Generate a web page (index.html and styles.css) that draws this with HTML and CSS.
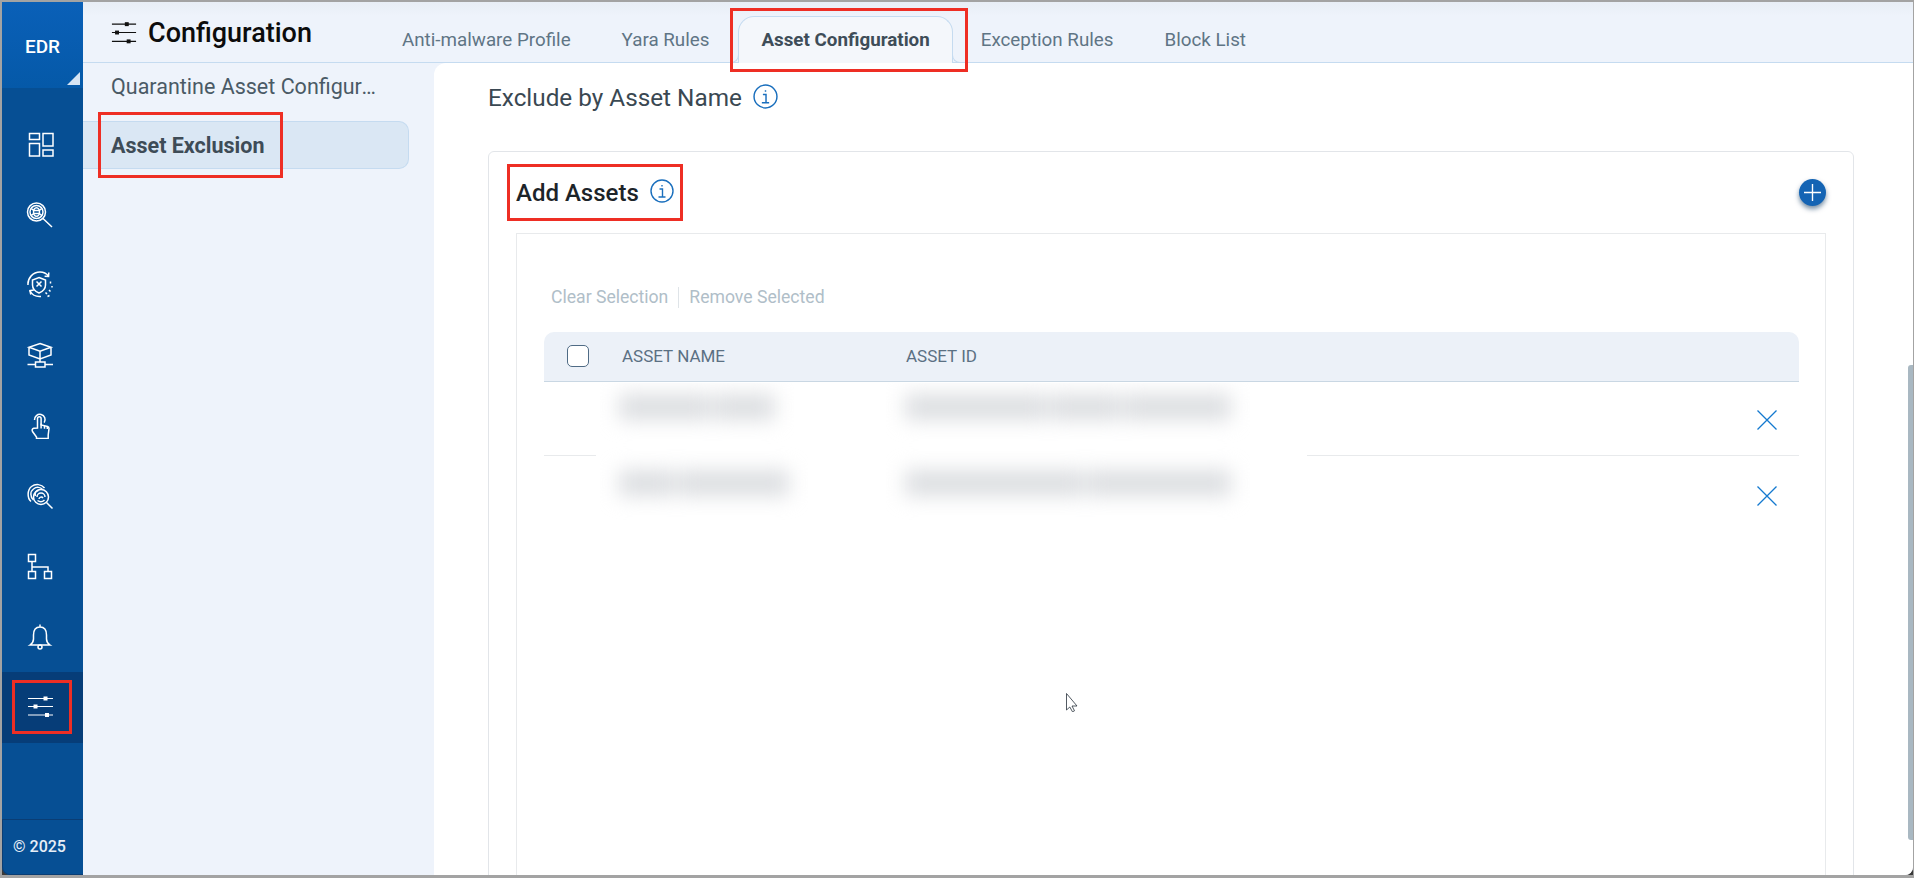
FILE: index.html
```html
<!DOCTYPE html>
<html lang="en">
<head>
<meta charset="utf-8">
<title>Configuration</title>
<link rel="stylesheet" href="styles.css">
</head>
<body>
<div class="frame">
  <aside class="sidebar">
    <div class="brand">EDR<span class="brand-corner"></span></div>
    <nav class="rail">
      <a class="rail-item"><svg class="ico" viewBox="0 0 28 28"><rect x="3.500" y="4.500" width="10" height="6"/><rect x="3.500" y="14.500" width="10" height="12.500"/><rect x="17" y="4.500" width="10" height="12.500"/><rect x="17" y="21" width="10" height="6"/></svg></a>
      <a class="rail-item"><svg class="ico" viewBox="0 0 28 28"><circle cx="10.500" cy="12" r="9"/><circle cx="10.500" cy="12" r="6.500"/><ellipse cx="10.500" cy="12" rx="3" ry="4.300"/><path d="M7.500 10.500h6M7.500 13.500h6M5.500 9l2 1M15.500 9l-2 1M5.500 15l2-1M15.500 15l-2-1M17 18.500l9 8.500"/></svg></a>
      <a class="rail-item"><svg class="ico" viewBox="0 0 28 28"><path d="M2 15C1.500 8 7 2 14 2c3.500 0 6.500 1.500 8.500 4M22.800 2.500l-.2 4-4-.3M4 21c2 3.500 6 6 11 5.500"/><path d="M4.800 24.500l-.9-3.800 3.900-.6"/><path d="M13 7.500l6.500 2.500v5c0 4-3 6.500-6.500 8-3.500-1.500-6.500-4-6.500-8v-5z"/><path d="M10.500 11.500l5 5M15.500 11.500l-5 5"/><path d="M24.500 11.500v2M26 16v1.500M19.500 22.500l1.500 1.500M23 20l1.500 1.500M21.500 26.500l2-1"/></svg></a>
      <a class="rail-item"><svg class="ico" viewBox="0 0 28 28"><path d="M14 2.500l11 3.800-11 4-11-4zM3 6.300V14l11 4 11-4V6.300M14 10.300V21"/><rect x="9.500" y="21" width="9.500" height="5"/><path d="M1.500 23.500h8M19 23.500h8"/></svg></a>
      <a class="rail-item"><svg class="ico" viewBox="0 0 28 28"><path d="M8.500 9a5.300 5.300 0 1 1 9.700 2.600"/><path d="M11.500 17V7.500a1.800 1.800 0 0 1 3.600 0V14l6.500 1.500c1 .3 1.400 1 1.400 2l-.8 6.500v3.500H10.500V26l-4-5.500c-.8-1.500 0-3 1.300-3.300z"/><path d="M15.100 12.500v5M18.500 14.800v3M21.300 15.500v2.500"/></svg></a>
      <a class="rail-item"><svg class="ico" viewBox="0 0 28 28"><path d="M5 19.500C1 16 1.200 8 5.500 4.500 9.500 1.500 15.500 2 18.500 6M7.500 18C4 15 4 9.500 7.500 7 10.500 4.500 14.500 5 16.500 7.500M9.500 14c-1-2.500 0-5 3-5.500"/><circle cx="15" cy="15" r="7.500"/><path d="M11 15a4 4 0 0 1 8 0M13 17a2.200 2.200 0 0 1 4-1M11.500 18.500c2 1.500 5 1.500 7-.5M20.500 20.500l6 6"/></svg></a>
      <a class="rail-item"><svg class="ico" viewBox="0 0 28 28"><rect x="2.500" y="2.500" width="7" height="7"/><rect x="2.500" y="19.500" width="7" height="7"/><rect x="18.500" y="19.500" width="7" height="7"/><path d="M6 9.500v10M6 15h16v4.500"/></svg></a>
      <a class="rail-item"><svg class="ico" viewBox="0 0 28 28"><path d="M14 1.500v2.500M14 4c-5 0-6.500 4-6.500 8v4c0 2.500-2 5-3.500 6h20c-1.500-1-3.500-3.500-3.500-6v-4c0-4-1.500-8-6.500-8z"/><circle cx="14" cy="24" r="2"/></svg></a>
      <a class="rail-item rail-active"><svg class="ico ico-sliders" viewBox="0 0 28 28"><path d="M2 5.500h25M2 13.500h25M2 22h25"/><rect x="17.500" y="3.500" width="4" height="4"/><rect x="7.500" y="11.500" width="4" height="4"/><rect x="19" y="20" width="4" height="4"/></svg></a>
    </nav>
    <div class="copyright">© 2025</div>
  </aside>

  <div class="main">
    <header class="topbar">
      <div class="title"><svg class="title-ico" viewBox="0 0 28 28"><path d="M1 4.500h26M1 13.500h26M1 23h26"/><rect x="15.500" y="3" width="3" height="3"/><rect x="5" y="12" width="3" height="3"/><rect x="17.500" y="21.500" width="3" height="3"/></svg><h1>Configuration</h1></div>
      <div class="tabs">
        <a class="tab">Anti-malware Profile</a>
        <a class="tab">Yara Rules</a>
        <a class="tab tab-active">Asset Configuration</a>
        <a class="tab">Exception Rules</a>
        <a class="tab">Block List</a>
      </div>
    </header>
    <div class="body">
      <div class="subnav">
        <a class="subnav-item">Quarantine Asset Configuration</a>
        <a class="subnav-item subnav-active">Asset Exclusion</a>
      </div>
      <section class="panel">
        <div class="panel-head">
          <h2>Exclude by Asset Name</h2>
          <svg class="info info-lg" viewBox="0 0 24 24"><circle cx="12" cy="12" r="11"/><path d="M9.500 10h3v8M8.500 18h7M12 6v1.500"/></svg>
        </div>
        <div class="card">
          <div class="card-head">
            <h3>Add Assets</h3>
            <svg class="info info-up" viewBox="0 0 24 24"><circle cx="12" cy="12" r="11"/><path d="M9.500 10h3v8M8.500 18h7M12 6v1.500"/></svg>
            <button class="add" type="button"><svg viewBox="0 0 16 16"><path d="M8 0v16M0 8h16"/></svg></button>
          </div>
          <div class="box">
            <div class="actions"><span>Clear Selection</span><i></i><span>Remove Selected</span></div>
            <div class="table">
              <div class="thead">
                <span class="check"></span>
                <span class="col-name">ASSET NAME</span>
                <span class="col-id">ASSET ID</span>
              </div>
              <div class="row row-first"><svg class="close" viewBox="0 0 20 20"><path d="M.5.500l19 19M19.500.500l-19 19"/></svg></div>
              <div class="row row-last"><svg class="close" viewBox="0 0 20 20"><path d="M.5.500l19 19M19.500.500l-19 19"/></svg></div>
              <div class="redact">
                <div class="redact-row redact-row-a">
                  <div class="blobs blobs-name"><b class="w60"></b><b class="w40"></b></div>
                  <div class="blobs blobs-id"><b class="w40"></b><b class="w20"></b><b class="w30"></b></div>
                </div>
                <div class="redact-row redact-row-b">
                  <div class="blobs blobs-name blobs-wide"><b class="w30"></b><b class="w60"></b></div>
                  <div class="blobs blobs-id"><b class="w50"></b><b class="w40"></b></div>
                </div>
              </div>
            </div>
          </div>
        </div>
      </section>
    </div>
  </div>

  <div class="scroll-thumb"></div>
  <svg class="cursor" viewBox="0 0 12 19"><path d="M.5.500v16.500l3.300-3 2.700 4.800 2-1-2.500-4.800h5z"/></svg>
  <div class="mark mark-exclusion"></div>
  <div class="mark mark-tab"></div>
  <div class="mark mark-add"></div>
  <div class="mark mark-rail"></div>
</div>
</body>
</html>
```

FILE: styles.css
```css
* { box-sizing: border-box; }
html, body { margin: 0; height: 100%; overflow: hidden; }
body { background: #a3a3a3; font-family: Roboto, "Liberation Sans", sans-serif; }
h1, h2, h3 { margin: 0; font-weight: 500; }

.frame {
  position: relative;
  width: 1914px;
  height: 878px;
  border-style: solid;
  border-color: #a3a3a3;
  border-width: 2px 1px 3px 2px;
  background: #3a3a3a;
  display: flex;
  overflow: hidden;
}

/* sidebar */
.sidebar {
  width: 81px;
  flex: none;
  display: flex;
  flex-direction: column;
  background: #064f94;
  border-bottom-left-radius: 8px;
  overflow: hidden;
}
.brand {
  position: relative;
  height: 86px;
  flex: none;
  background: linear-gradient(180deg, #0a60b8, #0559a8);
  color: #fff;
  font-size: 19px;
  font-weight: 500;
  text-align: center;
  padding-top: 33px;
  line-height: 24px;
}
.brand-corner {
  position: absolute;
  right: 3px;
  bottom: 3px;
  border-style: solid;
  border-width: 0 0 13px 13px;
  border-color: transparent transparent #d6e4f3 transparent;
}
.rail { padding-top: 20px; }
.rail-item {
  height: 70.5px;
  display: flex;
  align-items: center;
  justify-content: center;
  padding-right: 5px;
}
.rail-active { background: #063d78; }
.ico {
  width: 28px;
  height: 28px;
  fill: none;
  stroke: #fff;
  stroke-width: 1.500;
}
.ico-sliders { stroke-width: 1; }
.ico-sliders rect { fill: #fff; stroke: none; }
.copyright {
  margin-top: auto;
  height: 56px;
  border-top: 1px solid #0a3d74;
  border-bottom: 1px solid #0a3d74;
  border-left: 1px solid #0a3d74;
  border-bottom-left-radius: 8px;
  color: #e6eef7;
  font-size: 16px;
  font-weight: 500;
  line-height: 54px;
  padding-left: 10px;
}

/* main */
.main {
  flex: 1;
  min-width: 0;
  display: flex;
  flex-direction: column;
  background: #eef3fb;
  border-bottom-right-radius: 8px;
  overflow: hidden;
}
.topbar {
  height: 61px;
  flex: none;
  display: flex;
  align-items: flex-end;
  border-bottom: 1px solid #c5dbf0;
  background: linear-gradient(180deg, #e8eef6 0, #eef3fb 14px);
}
.title {
  width: 294px;
  flex: none;
  align-self: flex-start;
  display: flex;
  align-items: center;
  gap: 11px;
  padding: 17px 0 0 28px;
}
.title-ico { width: 26px; height: 26px; fill: #111; stroke: #111; stroke-width: 1.200; }
.title h1 { font-size: 27px; line-height: 28px; color: #0c0c0c; }
.tabs { display: flex; margin-bottom: -1px; }
.tab {
  position: relative;
  height: 47px;
  padding: 0 25px;
  line-height: 49px;
  font-size: 18.800px;
  color: #5f7585;
  white-space: nowrap;
  margin-right: 1px;
}
.tab-active {
  padding: 0 22px;
  margin: 0 3px 0 3px;
  background: #f4f7fb;
  border: 1px solid #c5dbf0;
  border-bottom: 0;
  border-radius: 16px 16px 0 0;
  font-weight: 700;
  color: #3e4d58;
  line-height: 47px;
}
.tab-active::before,
.tab-active::after {
  content: "";
  position: absolute;
  bottom: 0;
  width: 8px;
  height: 12px;
  border-bottom: 1px solid #c5dbf0;
}
.tab-active::before {
  left: -9px;
  border-right: 1px solid #c5dbf0;
  border-bottom-right-radius: 8px;
}
.tab-active::after {
  right: -9px;
  border-left: 1px solid #c5dbf0;
  border-bottom-left-radius: 8px;
}

.body { flex: 1; min-height: 0; display: flex; }
.subnav { width: 351px; flex: none; padding-right: 25px; }
.subnav-item {
  display: block;
  height: 47px;
  padding: 0 33px 0 28px;
  font-size: 21.500px;
  line-height: 47px;
  color: #4a5a66;
  white-space: nowrap;
  overflow: hidden;
  text-overflow: ellipsis;
}
.subnav-active {
  margin-top: 11px;
  height: 48px;
  background: #dae7f4;
  border: 1px solid #c5dbf0;
  border-left: 0;
  border-radius: 0 10px 10px 0;
  font-weight: 700;
  color: #3e4c57;
  line-height: 48px;
}

.panel {
  flex: 1;
  min-width: 0;
  background: #fff;
  border-top-left-radius: 12px;
  padding: 20px 59px 0 54px;
  overflow: hidden;
}
.panel-head { display: flex; align-items: center; gap: 11px; height: 28px; }
.panel-head h2 { font-size: 24.300px; font-weight: 400; color: #3a4852; line-height: 28px; margin-top: 2px; }
.info {
  width: 24px;
  height: 24px;
  fill: none;
  stroke: #1a6fbd;
  stroke-width: 1.400;
  flex: none;
}
.info-lg { width: 25px; height: 25px; margin-top: -2px; }
.info-up { margin-top: -4px; }

.card {
  margin-top: 40px;
  height: 900px;
  border: 1px solid #e2e5e9;
  border-radius: 6px;
}
.card-head {
  height: 81px;
  display: flex;
  align-items: center;
  gap: 11px;
  padding: 0 27px 0 27px;
}
.card-head h3 { font-size: 24px; color: #1d2429; line-height: 28px; }
.add {
  margin-left: auto;
  width: 27px;
  height: 27px;
  padding: 0;
  border: 0;
  border-radius: 50%;
  background: #1464b4;
  box-shadow: 0 3px 5px rgba(6, 50, 90, .55);
  display: flex;
  align-items: center;
  justify-content: center;
}
.add svg { width: 17px; height: 17px; fill: none; stroke: #fff; stroke-width: 1.300; }

.box {
  height: 800px;
  margin: 0 27px 0 27px;
  border: 1px solid #e8eaec;
  padding: 43px 26px 0 27px;
}
.actions {
  height: 40px;
  display: flex;
  align-items: center;
  gap: 10px;
  padding-left: 7px;
  font-size: 17.600px;
  color: #b0bec8;
}
.actions i { width: 1px; height: 21px; background: #dfe4e8; }

.table { position: relative; margin-top: 15px; }
.thead {
  height: 50px;
  display: flex;
  align-items: center;
  background: #ecf1f8;
  border-bottom: 1px solid #c9d7e3;
  border-radius: 10px 10px 0 0;
  padding: 0 0 2px 23px;
  font-size: 17px;
  color: #5b7083;
}
.check {
  width: 22px;
  height: 22px;
  background: #fff;
  border: 1px solid #4f6b85;
  border-radius: 5px;
  flex: none;
}
.col-name { margin-left: 33px; width: 284px; }
.row {
  height: 74px;
  display: flex;
  align-items: center;
  justify-content: flex-end;
  padding-right: 22px;
}
.row-first { border-bottom: 1px solid #e8eaec; padding-top: 2px; }
.row-last { height: 80px; }
.close { width: 20px; height: 20px; fill: none; stroke: #1479cf; stroke-width: 1.300; }

.redact {
  position: absolute;
  left: 52px;
  top: 51px;
  width: 711px;
  height: 150px;
  background: #fff;
  overflow: hidden;
}
.redact-row { display: flex; height: 75px; padding-top: 11px; }
.redact-row-b { padding-top: 12px; }
.blobs { display: flex; gap: 3px; height: 26px; filter: blur(10px); }
.blobs b { display: block; height: 26px; background: #dcdee1; }
.blobs-name { width: 156px; margin-left: 23px; }
.blobs-wide { width: 170px; }
.blobs-id { width: 326px; margin-left: 130px; }
.blobs-wide + .blobs-id { margin-left: 116px; }
.w20 { flex: 2; }
.w30 { flex: 3; }
.w40 { flex: 4; }
.w50 { flex: 5; }
.w60 { flex: 6; }

/* overlays */
.scroll-thumb {
  position: absolute;
  left: 1906px;
  top: 363px;
  width: 5px;
  height: 475px;
  background: #a9b8c2;
  border-radius: 3px 0 0 3px;
}
.cursor {
  position: absolute;
  left: 1064px;
  top: 691px;
  width: 12px;
  height: 19px;
  fill: #fff;
  stroke: #26303a;
  stroke-width: .8;
}
.mark {
  position: absolute;
  border: 3px solid #ee2e24;
}
.mark-exclusion { left: 96px; top: 110px; width: 185px; height: 66px; }
.mark-tab { left: 728px; top: 6px; width: 238px; height: 64px; }
.mark-add { left: 505px; top: 162px; width: 176px; height: 57px; }
.mark-rail { left: 10px; top: 678px; width: 60px; height: 54px; }
```
